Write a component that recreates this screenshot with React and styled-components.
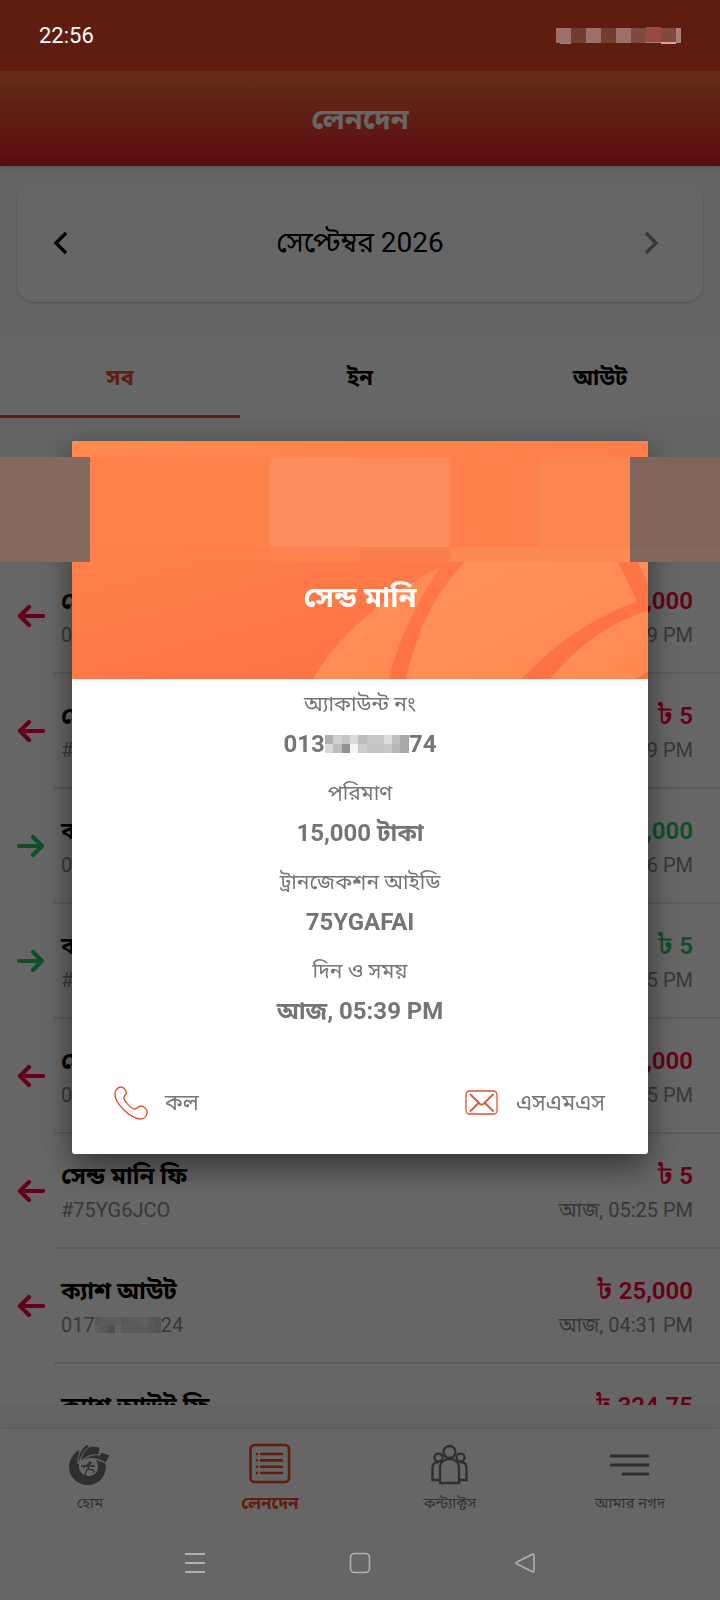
import React, { useState } from 'react'
import styled, { createGlobalStyle, css } from 'styled-components'

const GlobalStyle = createGlobalStyle`
  * {
    box-sizing: border-box;
  }

  body {
    margin: 0;
    background: #666666;
    font-family: Roboto, 'Noto Sans Bengali', 'Noto Sans', sans-serif;
    line-height: 1.2;
  }

  button {
    font-family: inherit;
    line-height: inherit;
    border: 0;
    padding: 0;
    background: none;
    cursor: pointer;
  }
`

const transactions = [
  { id: 1, title: 'সেন্ড মানি', ref: '013', tail: '74', amount: '15,000', time: '05:39 PM' },
  { id: 2, title: 'সেন্ড মানি ফি', ref: '#75YGAFAI', amount: '5', time: '05:39 PM' },
  { id: 3, title: 'ক্যাশ ইন', ref: '013', tail: '74', amount: '15,000', time: '05:36 PM', incoming: true },
  { id: 4, title: 'ক্যাশ ইন ফি', ref: '#75YG8K2B', amount: '5', time: '05:35 PM', incoming: true },
  { id: 5, title: 'সেন্ড মানি', ref: '013', tail: '74', amount: '15,000', time: '05:25 PM' },
  { id: 6, title: 'সেন্ড মানি ফি', ref: '#75YG6JCO', amount: '5', time: '05:25 PM' },
  { id: 7, title: 'ক্যাশ আউট', ref: '017', tail: '24', amount: '25,000', time: '04:31 PM' },
  { id: 8, title: 'ক্যাশ আউট ফি', ref: '#75YFZ4QM', amount: '324.75', time: '04:31 PM' },
]

const tabs = ['সব', 'ইন', 'আউট']

const details = [
  { label: 'অ্যাকাউন্ট নং', value: '013', tail: '74' },
  { label: 'পরিমাণ', value: '15,000 টাকা' },
  { label: 'ট্রানজেকশন আইডি', value: '75YGAFAI' },
  { label: 'দিন ও সময়', value: 'আজ, 05:39 PM' },
]

const maskTones = [
  ['#b0b0b0', '#d0d0d0', '#c4c4c4', '#dadada', '#bdbdbd', '#c8c8c8', '#c8c8c8', '#dcdcdc', '#c0c0c0', '#a8a8a8'],
  ['#d8d8d8', '#bdbdbd', '#929292', '#f5f5f5', '#cccccc', '#c4c4c4', '#c4c4c4', '#c8c8c8', '#b8b8b8', '#a8a8a8'],
]

const bandTones = [
  '#836a5c', '#ff824b', '#ff824b', '#fc8c5d', '#fc8b5c', '#ff7f4a', '#fb8651', '#80665a',
  '#84695d', '#ff8149', '#fe7f49', '#fb8350', '#fb7f4e', '#fb8952', '#fb8952', '#82685c',
]

function Chevron({ right }) {
  return (
    <svg width="16" height="24" viewBox="0 0 16 24" fill="none" stroke="currentColor" strokeWidth="3.4">
      <path d={right ? 'M2 2l10 10L2 22' : 'M14 2L4 12l10 10'} />
    </svg>
  )
}

function Arrow({ incoming }) {
  return (
    <svg
      width="28"
      height="24"
      viewBox="0 0 28 24"
      fill="none"
      stroke="currentColor"
      strokeWidth="4.2"
      strokeLinecap="round"
      strokeLinejoin="round"
    >
      <path d={incoming ? 'M2 12h23M16 3l9 9-9 9' : 'M26 12H3M12 3l-9 9 9 9'} />
    </svg>
  )
}

function HomeIcon() {
  return (
    <svg width="42" height="42" viewBox="0 0 42 42" fill="currentColor">
      <path d="M10 7C4 11 0 17 0 24c0 10 8 18 19 18 10 0 18-8 18-19l-1-3-9-3c1 2 2 4 2 7 0 5-4 9-9 9s-10-4-10-9c0-3 0-6 1-8z" />
      <g stroke="#fff" strokeWidth="1">
        <path d="M9 21C8 14 11 7 18 1l3 4c-6 4-9 9-12 16z" />
        <path d="M11 19C13 10 17 5 22 3l9 1-1 8c-8-1-14 2-19 7z" />
        <path d="M13 18c5-5 11-7 18-6l1-3 9 3-4 8c-8-5-16-6-24-2z" />
      </g>
      <circle cx="21" cy="20" r="1.8" />
      <path fill="none" stroke="currentColor" strokeWidth="1.3" d="M20 21l-1 5 5 1 1 3M12 23h14M19 21l-5 4M18 26l-2 7" />
    </svg>
  )
}

function ListIcon() {
  return (
    <svg width="42" height="42" viewBox="0 0 42 42" fill="none" stroke="currentColor">
      <rect x="1.5" y="2" width="38.5" height="37" rx="4" strokeWidth="2.6" />
      <path strokeWidth="2.4" d="M7 11h2M7 17.4h2M7 23.7h2M7 30h2" />
      <path strokeWidth="2.6" strokeLinecap="round" d="M12 11h21M12 17.4h21M12 23.7h21M12 30h21" />
    </svg>
  )
}

function ContactsIcon() {
  return (
    <svg width="42" height="42" viewBox="0 0 42 42" fill="none" stroke="currentColor" strokeWidth="2.3">
      <circle cx="20.5" cy="9" r="6" />
      <circle cx="9.5" cy="14.5" r="4" />
      <circle cx="31.5" cy="14.5" r="4" />
      <path d="M11 40V25c0-6 4-9 9.5-9s9.500 3 9.500 9v15z" />
      <path d="M11 37H3.500V25c0-4 2.500-6 6.500-6M30 37h7.500V25c0-4-2.500-6-6.500-6" />
    </svg>
  )
}

function MenuIcon() {
  return (
    <svg width="42" height="42" viewBox="0 0 42 42" fill="none" stroke="currentColor" strokeWidth="2.8" strokeLinecap="round">
      <path d="M2 13h37M2 22h37M14 31h25" />
    </svg>
  )
}

function PhoneIcon() {
  return (
    <svg width="34" height="34" viewBox="0 0 34 34" fill="none" stroke="currentColor" strokeWidth="1.4">
      <path d="M7 1c3 0 6 4 5 7l-2 3c-1 3 7 12 11 12 2 0 3-3 6-3s7 4 6 7c0 3-3 6-6 6C17 33 1 18 1 8c0-4 3-7 6-7z" />
    </svg>
  )
}

function MailIcon() {
  return (
    <svg width="34" height="26" viewBox="0 0 34 26" fill="none" stroke="currentColor">
      <rect x="1" y="1" width="31" height="23" rx="3.5" strokeWidth="1.3" />
      <path strokeWidth="1.8" strokeLinecap="round" d="M5.5 4.5L15 14q1.7 1.2 3.4 0L28 4.500M5.500 21l8-8M28 21l-8-8" />
    </svg>
  )
}

function Mask({ faint }) {
  return (
    <MaskGrid $faint={faint} aria-hidden="true">
      {maskTones.flat().map((tone, i) => (
        <MaskCell key={i} $tone={tone} />
      ))}
    </MaskGrid>
  )
}

function StatusMask() {
  return (
    <svg width="126" height="18" viewBox="0 0 126 18" aria-hidden="true">
      <path fill="#9b7068" d="M0 1h15v15H0zM30 1h15v15H30zM60 1h15v15H60z" />
      <path fill="#743b2f" d="M15 1h15v15H15zM45 1h15v15H45z" />
      <path fill="#804a40" d="M75 1h15v15H75zM105 1h15v15h-15z" />
      <path fill="#974944" d="M90 0h15v16H90z" />
      <path fill="#a98077" d="M120 1h5v15h-5zM4 16h11v1H4zM90 15h15v1H90z" />
      <path fill="#c8a9a2" d="M105 15h15v2h-15z" />
    </svg>
  )
}

function HeroArt() {
  return (
    <HeroSvg viewBox="0 0 576 238" preserveAspectRatio="xMaxYMax slice" aria-hidden="true">
      <defs>
        <linearGradient id="petal" x1="0" y1="0" x2="1" y2="1">
          <stop offset="0" stopColor="#ff935a" />
          <stop offset="1" stopColor="#ff8850" />
        </linearGradient>
      </defs>
      <path fill="url(#petal)" d="M241 238C262 200 310 155 368 126C345 160 326 200 317 238z" />
      <path fill="url(#petal)" d="M334 238C345 190 364 150 393 121H546L565 160C515 180 480 205 450 238z" />
      <path fill="url(#petal)" d="M478 238C505 205 540 180 576 170V231L562 238z" />
      <path fill="url(#petal)" d="M566 121h10v22z" />
    </HeroSvg>
  )
}

export default function App() {
  const [activeTab, setActiveTab] = useState(0)

  return (
    <Screen>
      <GlobalStyle />
      <StatusBar>
        <span>22:56</span>
        <StatusMask />
      </StatusBar>
      <Header>লেনদেন</Header>
      <MonthCard>
        <MonthButton aria-label="Previous month">
          <Chevron />
        </MonthButton>
        <span>সেপ্টেম্বর 2026</span>
        <MonthButton aria-label="Next month" $next>
          <Chevron right />
        </MonthButton>
      </MonthCard>
      <Tabs>
        {tabs.map((tab, i) => (
          <Tab key={tab} $active={i === activeTab} onClick={() => setActiveTab(i)}>
            {tab}
          </Tab>
        ))}
      </Tabs>
      <List>
        <DateRow />
        {transactions.map(item => (
          <Row key={item.id}>
            <ArrowWrap $incoming={item.incoming}>
              <Arrow incoming={item.incoming} />
            </ArrowWrap>
            <RowBody>
              <RowLine>
                <RowTitle>{item.title}</RowTitle>
                <Amount $incoming={item.incoming}>
                  <Taka>৳</Taka> {item.amount}
                </Amount>
              </RowLine>
              <RowLine $small>
                <RowMeta>
                  {item.ref}
                  {item.tail && <Mask faint />}
                  {item.tail}
                </RowMeta>
                <RowMeta>আজ, {item.time}</RowMeta>
              </RowLine>
            </RowBody>
          </Row>
        ))}
      </List>
      <BottomNav>
        <NavLink href="#home">
          <HomeIcon />
          হোম
        </NavLink>
        <NavLink href="#transactions" $active>
          <ListIcon />
          লেনদেন
        </NavLink>
        <NavLink href="#contacts">
          <ContactsIcon />
          কন্ট্যাক্টস
        </NavLink>
        <NavLink href="#more">
          <MenuIcon />
          আমার নগদ
        </NavLink>
      </BottomNav>
      <SystemNav>
        <SystemButton aria-label="Recent apps">
          <svg width="22" height="22" viewBox="0 0 22 22" stroke="currentColor" strokeWidth="2">
            <path d="M1 2h20M1 11h20M1 20h20" />
          </svg>
        </SystemButton>
        <SystemButton aria-label="Home screen">
          <svg width="22" height="22" viewBox="0 0 22 22" fill="none" stroke="currentColor" strokeWidth="1.6">
            <rect x="1.5" y="1.5" width="19" height="19" rx="4" />
          </svg>
        </SystemButton>
        <SystemButton aria-label="Back">
          <svg width="22" height="22" viewBox="0 0 22 22" fill="none" stroke="currentColor" strokeWidth="1.6" strokeLinejoin="round">
            <path d="M19 2L3 10q-2 1 0 2l16 8q1 0 1-1V3q0-1-1-1z" />
          </svg>
        </SystemButton>
      </SystemNav>

      <Scrim>
        <Dialog role="dialog" aria-labelledby="dialog-title">
          <Hero>
            <HeroArt />
            <Band aria-hidden="true">
              {bandTones.map((tone, i) => (
                <BandCell key={i} $tone={tone} />
              ))}
            </Band>
            <HeroTitle id="dialog-title">সেন্ড মানি</HeroTitle>
          </Hero>
          <Details>
            {details.map(({ label, value, tail }) => (
              <React.Fragment key={label}>
                <dt>{label}</dt>
                <dd>
                  {value}
                  {tail && <Mask />}
                  {tail}
                </dd>
              </React.Fragment>
            ))}
          </Details>
          <Actions>
            <Action>
              <PhoneIcon />
              <span>কল</span>
            </Action>
            <Action>
              <MailIcon />
              <span>এসএমএস</span>
            </Action>
          </Actions>
        </Dialog>
      </Scrim>
    </Screen>
  )
}

const Screen = styled.div`
  height: 100vh;
  display: flex;
  flex-direction: column;
  overflow: hidden;
  background: #fafafa;
  color: #000;
`

/* the system bars stay above the scrim, so their colours are already dimmed */
const StatusBar = styled.div`
  flex: none;
  height: 71px;
  padding: 0 38px 0 39px;
  display: flex;
  align-items: center;
  justify-content: space-between;
  position: relative;
  z-index: 3;
  background: #5f1d10;
  color: #fff;
  font-size: 22px;
  line-height: 28px;
`

const Header = styled.header`
  flex: none;
  height: 95px;
  padding-top: 2px;
  display: flex;
  align-items: center;
  justify-content: center;
  background: linear-gradient(#fa7442, #f04a30 50%, #e61a2b);
  color: #fff;
  font-size: 29px;
  font-weight: 700;
  box-shadow: 0 2px 8px rgba(0, 0, 0, 0.15);
`

const MonthCard = styled.section`
  flex: none;
  height: 119px;
  margin: 17px 17px 33px;
  padding: 0 35px;
  display: grid;
  grid-template-columns: 1fr auto 1fr;
  align-items: center;
  border-radius: 18px;
  background: #fff;
  box-shadow: 0 1px 3px rgba(0, 0, 0, 0.2);
  font-size: 28px;
`

const MonthButton = styled.button`
  display: flex;
  justify-self: start;
  color: #000;
  ${p =>
    p.$next &&
    css`
      justify-self: end;
      padding-right: 8px;
      color: #8a8a8a;
    `}
`

const Tabs = styled.nav`
  flex: none;
  height: 83px;
  display: flex;
  background: #fff;
`

const Tab = styled.button`
  flex: 1;
  padding-top: 7px;
  border-bottom: 3px solid transparent;
  font-size: 22px;
  font-weight: 700;
  color: #000;
  ${p =>
    p.$active &&
    css`
      color: #f04c2a;
      border-bottom-color: #f04c2a;
    `}
`

const List = styled.main`
  flex: 1;
  min-height: 0;
  margin: 39px 0 24px;
  overflow: hidden;
  background: #fff;
`

const DateRow = styled.div`
  height: 102px;
`

const Row = styled.article`
  height: 115px;
  display: flex;
  padding-left: 17px;
`

const ArrowWrap = styled.div`
  flex: 0 0 37px;
  padding-top: 45px;
  color: ${p => (p.$incoming ? '#26c468' : '#ff0040')};
`

const RowBody = styled.div`
  flex: 1;
  padding: 25px 27px 0 7px;
  border-bottom: 2px solid #e4e4e4;
`

const RowLine = styled.div`
  height: ${p => (p.$small ? '31px' : '35px')};
  display: flex;
  align-items: center;
  justify-content: space-between;
`

const RowTitle = styled.h2`
  margin: 0;
  font-size: 24px;
  font-weight: 700;
`

const Amount = styled.span`
  font-size: 24px;
  font-weight: 600;
  color: ${p => (p.$incoming ? '#26c468' : '#ff0040')};
`

const Taka = styled.span`
  font-family: 'Noto Serif Bengali', 'Noto Sans Bengali', FreeSerif, 'Noto Sans', sans-serif;
  font-size: 28px;
  line-height: 1;
`

const RowMeta = styled.span`
  display: flex;
  align-items: center;
  white-space: pre;
  font-size: 20px;
  color: #8c8c8c;
`

const MaskGrid = styled.span`
  display: inline-grid;
  grid-template-columns: repeat(10, 1fr);
  grid-auto-rows: ${p => (p.$faint ? '8px' : '9px')};
  width: ${p => (p.$faint ? '66px' : '84px')};
  opacity: ${p => (p.$faint ? 0.5 : 1)};
`

const MaskCell = styled.i`
  background: ${p => p.$tone};
`

const BottomNav = styled.nav`
  flex: none;
  height: 94px;
  display: flex;
  background: #fff;
  box-shadow: 0 -1px 3px rgba(0, 0, 0, 0.12);
`

const NavLink = styled.a`
  flex: 1;
  display: flex;
  flex-direction: column;
  align-items: center;
  gap: 7px;
  padding-top: 14px;
  font-size: 15px;
  line-height: 22px;
  text-decoration: none;
  color: #808080;

  svg {
    color: #757575;
  }

  ${p =>
    p.$active &&
    css`
      font-size: 17px;
      font-weight: 700;
      color: #f04c2a;

      svg {
        color: #f04c2a;
      }
    `}
`

const SystemNav = styled.nav`
  flex: none;
  height: 77px;
  padding: 2px 113px 0;
  display: flex;
  align-items: center;
  justify-content: space-around;
  position: relative;
  z-index: 3;
  background: #666;
`

const SystemButton = styled.button`
  display: flex;
  color: #b0b0b0;
`

const Scrim = styled.div`
  position: fixed;
  inset: 0;
  z-index: 2;
  display: flex;
  align-items: center;
  justify-content: center;
  padding-bottom: 5px;
  background: rgba(0, 0, 0, 0.6);
`

const Dialog = styled.div`
  width: 80%;
  border-radius: 3px;
  background: #fff;
  box-shadow: 0 12px 32px rgba(0, 0, 0, 0.5);
`

const Hero = styled.div`
  height: 238px;
  position: relative;
  display: flex;
  justify-content: center;
  padding-top: 136px;
  border-radius: 3px 3px 0 0;
  background: linear-gradient(165deg, #ff8a4e, #ff7546 70%, #fd6f43);
`

const HeroSvg = styled.svg`
  position: absolute;
  inset: 0;
  width: 100%;
  height: 100%;
`

const Band = styled.div`
  position: absolute;
  top: 16px;
  left: 50%;
  width: 100vw;
  transform: translateX(-50%);
  display: grid;
  grid-template-columns: repeat(8, 1fr);
  grid-template-rows: 90px 15px;
`

const BandCell = styled.i`
  background: ${p => p.$tone};
`

const HeroTitle = styled.h1`
  position: relative;
  margin: 0;
  font-size: 29px;
  line-height: 40px;
  font-weight: 700;
  color: #fff;
`

const Details = styled.dl`
  margin: 0;
  padding-top: 8px;
  text-align: center;
  color: #757575;

  dt {
    font-size: 21px;
    line-height: 34px;
  }

  dd {
    display: flex;
    align-items: center;
    justify-content: center;
    height: 46px;
    margin: 0 0 9px;
    font-size: 24px;
    font-weight: 700;
  }
`

const Actions = styled.div`
  display: flex;
  justify-content: space-between;
  padding: 43px 43px 34px 42px;
`

const Action = styled.button`
  height: 34px;
  display: flex;
  align-items: center;
  gap: 17px;
  font-size: 22px;
  line-height: 24px;
  color: #757575;

  svg {
    color: #e0542f;
  }
`
